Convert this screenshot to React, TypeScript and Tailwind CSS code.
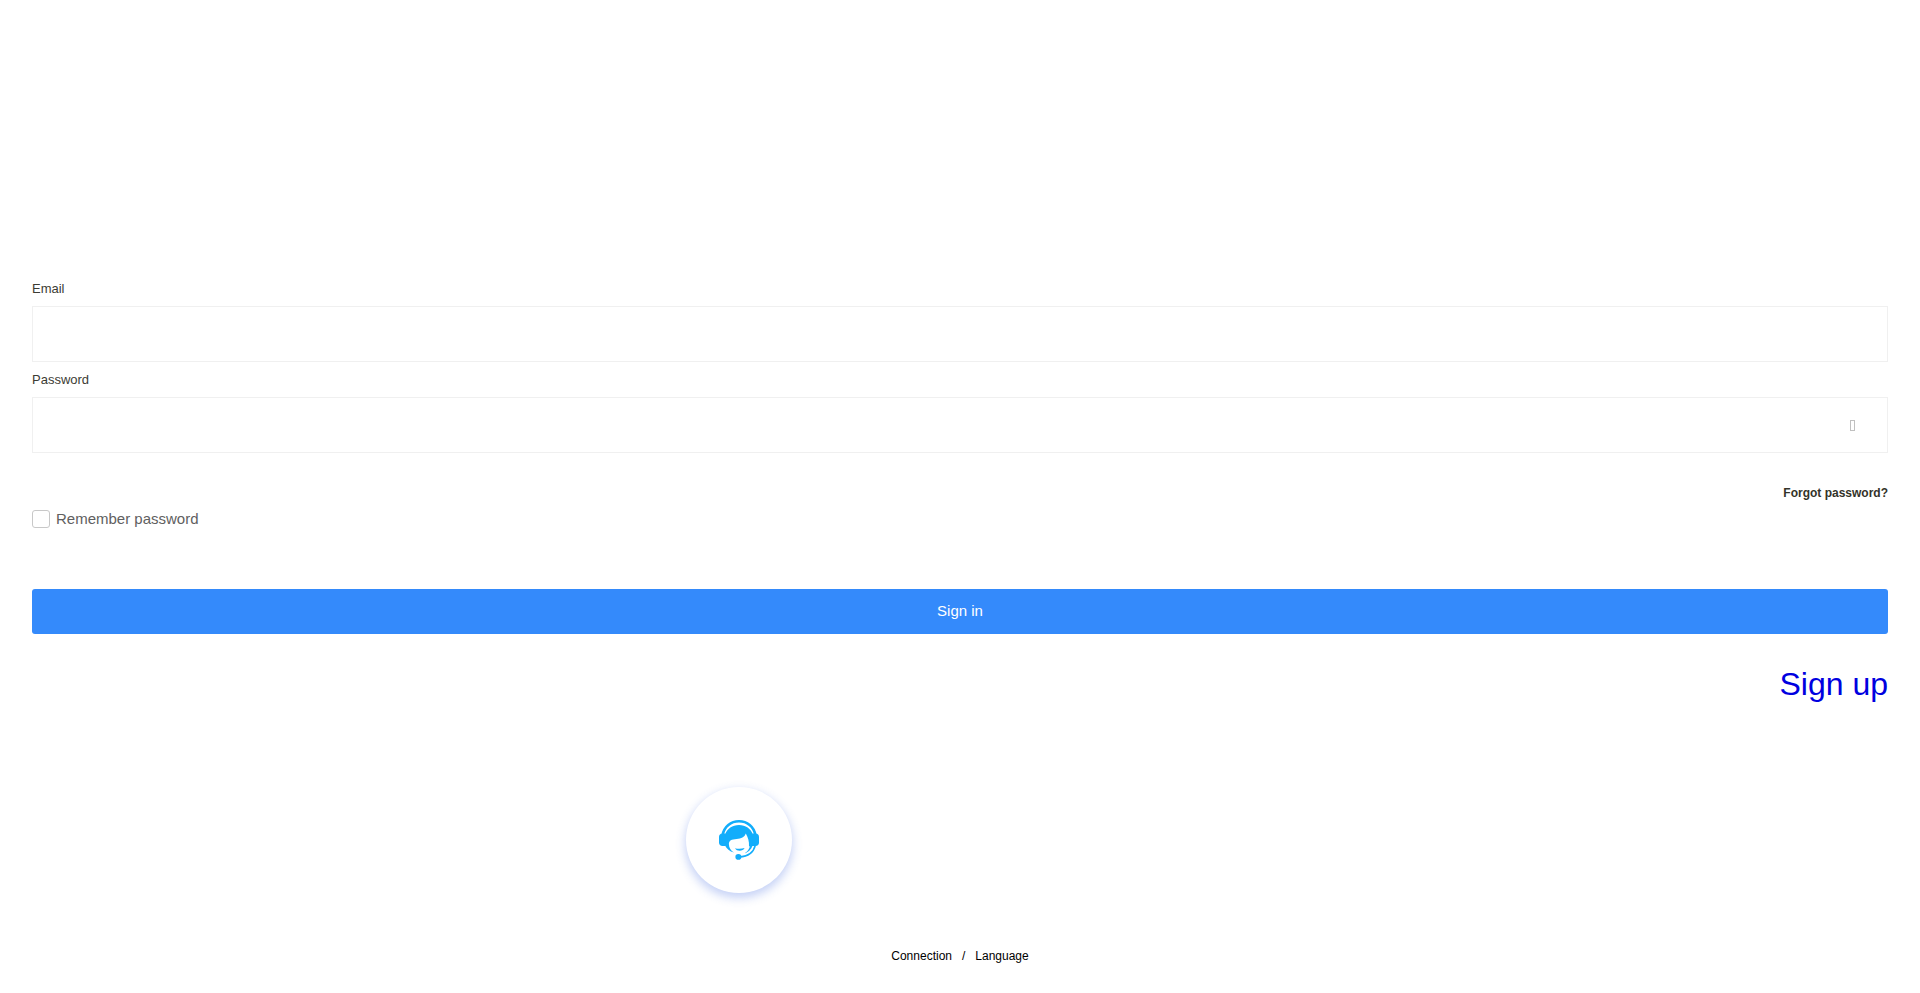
import { FC, useState } from "react";

const SupportIcon: FC = () => (
  <svg width="40" height="40" viewBox="0 0 40 40" fill="none" aria-hidden="true">
    {/* headband */}
    <path d="M3.6 15C5.2 6.6 11.8 1.3 20 1.3S34.8 6.6 36.4 15" stroke="#12adfb" strokeWidth="2.6" />
    {/* hair */}
    <path
      d="M6 14.5C8.2 8.6 13.4 5 20 5S31.8 8.6 34 14.5V26L30 26.4C30.3 21.6 29 17.6 26.8 13.6C25.4 17.4 22.4 18.8 17.6 19C12.6 19.2 9.8 20.6 9.9 24.2C10 27.6 11.8 30.6 15 32.6C10.6 31.6 7.6 28.6 6 25.6Z"
      fill="#12adfb"
    />
    {/* ear cups */}
    <path d="M6.6 13.6V26H3.4C1.3 26 0 24.8 0 22.8V17C0 15 1.3 13.6 3.4 13.6Z" fill="#12adfb" />
    <path d="M33.4 13.6V26H36.6C38.7 26 40 24.8 40 22.8V17C40 15 38.7 13.6 36.6 13.6Z" fill="#12adfb" />
    {/* smile */}
    <path d="M16 28.2C18.4 29 22.6 29 25.6 28C24 31.6 17.6 31.6 16 28.2Z" fill="#12adfb" />
    {/* microphone */}
    <path d="M36.4 25C34.6 32.4 29 36.6 20.5 36.9" stroke="#12adfb" strokeWidth="1.5" />
    <path d="M31.2 25.4C30.4 28.6 28.6 31.4 25.8 33.2C28.8 32.4 32.2 29.6 33.6 25.4Z" fill="#12adfb" />
    <ellipse cx="19.4" cy="36.9" rx="3" ry="2.8" fill="#12adfb" />
  </svg>
);

const App: FC = () => {
  const [showPassword, setShowPassword] = useState(false);

  return (
    <div className="min-h-screen bg-white pt-[281px] font-['Liberation_Sans',Arial,sans-serif]">
      <form className="px-8" onSubmit={(e) => e.preventDefault()}>
        <label htmlFor="email" className="block text-[13px] leading-4 text-[#3c3c34]">
          Email
        </label>
        <input
          id="email"
          type="email"
          className="mt-[9px] block h-14 w-full border border-[#f0f0f0] px-4 text-base outline-none focus:border-[#348afb]"
        />

        <label htmlFor="password" className="mt-2.5 block text-[13px] leading-4 text-[#3c3c34]">
          Password
        </label>
        <div className="mt-[9px] flex h-14 items-center border border-[#f0f0f0] pr-8">
          <input
            id="password"
            type={showPassword ? "text" : "password"}
            className="h-full min-w-0 flex-1 px-4 text-base outline-none"
          />
          <button type="button" aria-label="Show password" onClick={() => setShowPassword(!showPassword)}>
            <span className="block h-[11px] w-[5px] border border-[#c0c0c0]" />
          </button>
        </div>

        <div className="mt-8 flex justify-end">
          <a href="#forgot" className="text-xs font-bold text-[#333329]">
            Forgot password?
          </a>
        </div>
        <div className="mt-2 flex items-center gap-1.5">
          <input
            id="remember"
            type="checkbox"
            className="size-[18px] appearance-none rounded-[3px] border border-[#c8c8c8] bg-white checked:bg-[#348afb]"
          />
          <label htmlFor="remember" className="text-[15px] leading-5 text-[#606060]">
            Remember password
          </label>
        </div>

        <button type="submit" className="mt-15 block h-[45px] w-full rounded-[3px] bg-[#348afb] text-[15px] text-white">
          Sign in
        </button>
        <div className="mt-8 flex justify-end">
          <a href="#signup" className="text-[32px] leading-9 text-[#0000e0]">
            Sign up
          </a>
        </div>
      </form>

      <div className="mt-[85px] pl-[35.75%]">
        <button
          type="button"
          aria-label="Customer support"
          className="flex size-[106px] items-center justify-center rounded-full bg-white shadow-[0_4px_10px_1px_rgba(65,105,225,0.3)]"
        >
          <SupportIcon />
        </button>
      </div>

      <div className="mt-[55px] flex justify-center gap-2.5 pb-6 text-xs text-black">
        <a href="#connection">Connection</a>
        <span>/</span>
        <a href="#language">Language</a>
      </div>
    </div>
  );
};

export default App;
